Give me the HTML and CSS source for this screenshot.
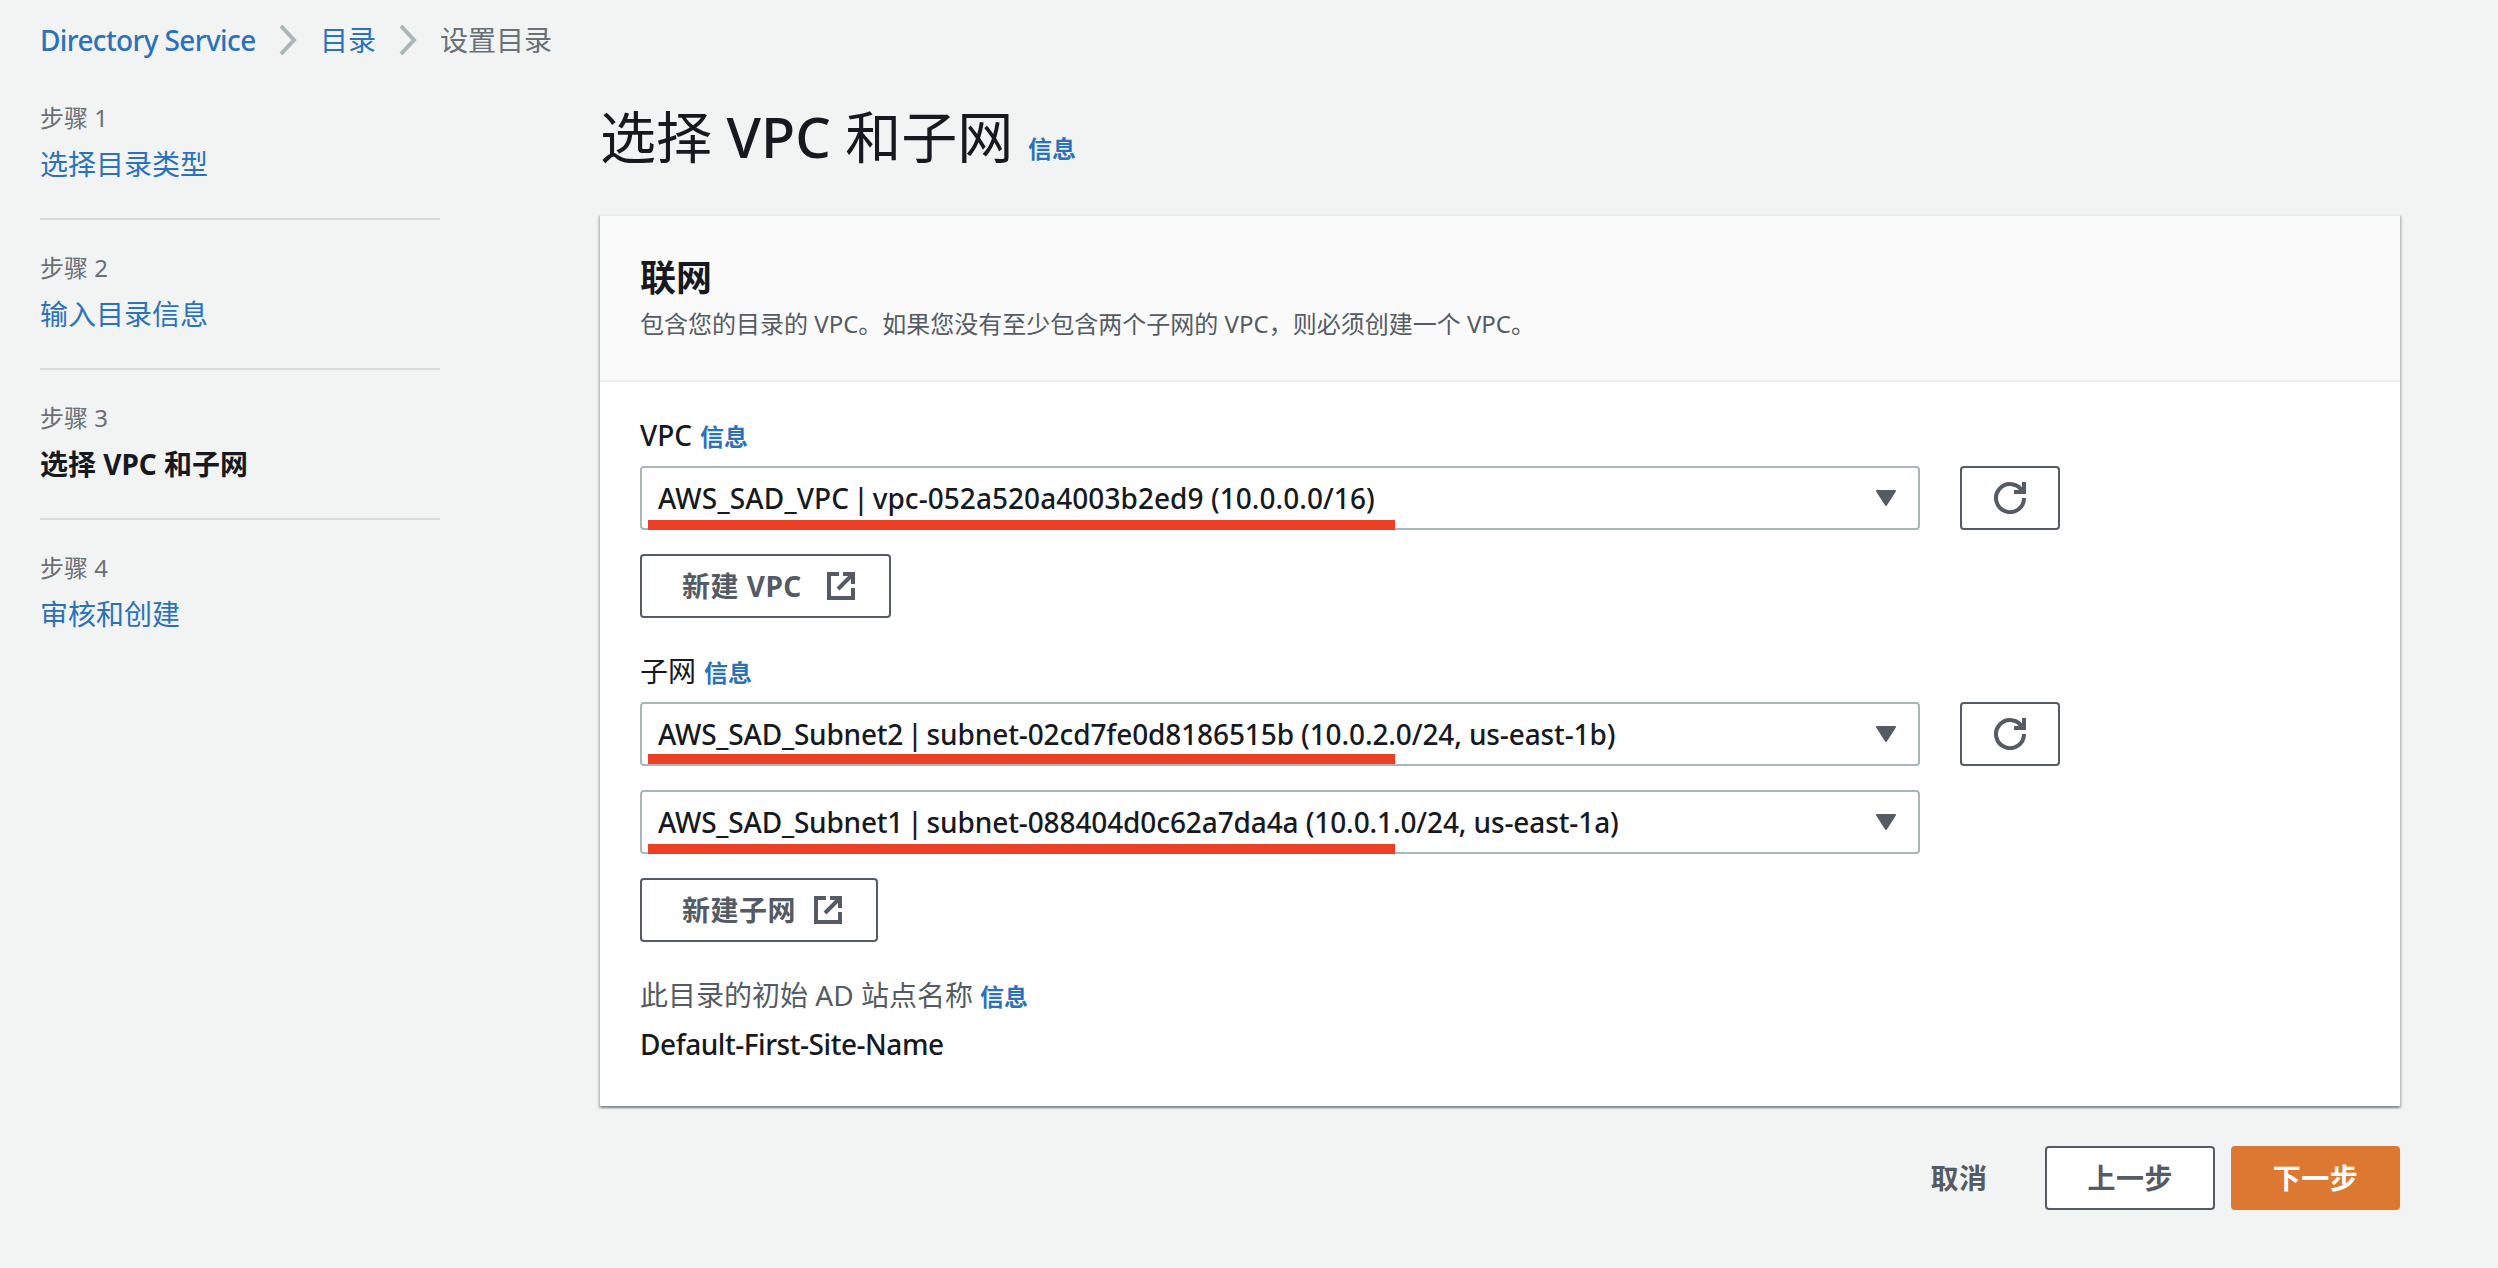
FILE: index.html
```html
<!DOCTYPE html>
<html lang="zh-CN">
<head>
<meta charset="utf-8">
<title>选择 VPC 和子网</title>
<link rel="stylesheet" href="styles.css">
</head>
<body>
<nav class="breadcrumbs">
  <a class="link service">Directory Service</a>
  <svg class="chevron" viewBox="0 0 20 32"><path d="M3 2 L16 16 L3 30"/></svg>
  <a class="link">目录</a>
  <svg class="chevron" viewBox="0 0 20 32"><path d="M3 2 L16 16 L3 30"/></svg>
  <span class="crumb-current">设置目录</span>
</nav>
<div class="layout">
  <ol class="steps">
    <li class="step"><span class="step-label">步骤 1</span><a class="step-name link">选择目录类型</a></li>
    <li class="step"><span class="step-label">步骤 2</span><a class="step-name link">输入目录信息</a></li>
    <li class="step"><span class="step-label">步骤 3</span><span class="step-name active">选择 VPC 和子网</span></li>
    <li class="step"><span class="step-label">步骤 4</span><a class="step-name link">审核和创建</a></li>
  </ol>
  <main class="content">
    <header class="page-head"><h1>选择 <span class="latin">VPC</span> 和子网</h1><a class="info">信息</a></header>
    <section class="card">
      <header class="card-head">
        <h2>联网</h2>
        <p>包含您的目录的 VPC。如果您没有至少包含两个子网的 VPC，则必须创建一个 VPC。</p>
      </header>
      <div class="card-body">
        <div class="label"><span class="latin vpc-label">VPC</span><a class="info">信息</a></div>
        <div class="row">
          <div class="select marked"><span class="option vpc"><span class="name">AWS_SAD_VPC</span> <span class="pipe">|</span> <span class="detail">vpc-052a520a4003b2ed9 (10.0.0.0/16)</span></span><svg class="caret" viewBox="0 0 20 16"><path d="M1 1h18l-9 14z"/></svg></div>
          <button class="btn refresh"><svg class="icon" viewBox="0 0 16 16"><path d="M10 5h5V0M15 8a7 7 0 1 1-.7-3"/></svg></button>
        </div>
        <button class="btn create wide"><span>新建 VPC</span><svg class="icon" viewBox="0 0 16 16"><path d="M7 2H2v12h12V9M9 2h5v5M14 2L6.500 9.500"/></svg></button>
        <div class="label second"><span>子网</span><a class="info">信息</a></div>
        <div class="row">
          <div class="select marked raised"><span class="option"><span class="name">AWS_SAD_Subnet2</span> <span class="pipe">|</span> <span class="detail">subnet-02cd7fe0d8186515b (10.0.2.0/24, us-east-1b)</span></span><svg class="caret" viewBox="0 0 20 16"><path d="M1 1h18l-9 14z"/></svg></div>
          <button class="btn refresh"><svg class="icon" viewBox="0 0 16 16"><path d="M10 5h5V0M15 8a7 7 0 1 1-.7-3"/></svg></button>
        </div>
        <div class="row next">
          <div class="select marked"><span class="option"><span class="name">AWS_SAD_Subnet1</span> <span class="pipe">|</span> <span class="detail">subnet-088404d0c62a7da4a (10.0.1.0/24, us-east-1a)</span></span><svg class="caret" viewBox="0 0 20 16"><path d="M1 1h18l-9 14z"/></svg></div>
        </div>
        <button class="btn create"><span>新建子网</span><svg class="icon" viewBox="0 0 16 16"><path d="M7 2H2v12h12V9M9 2h5v5M14 2L6.500 9.500"/></svg></button>
        <div class="label site"><span>此目录的初始 AD 站点名称</span><a class="info">信息</a></div>
        <div class="value">Default-First-Site-Name</div>
      </div>
    </section>
    <footer class="actions">
      <button class="btn plain">取消</button>
      <button class="btn">上一步</button>
      <button class="btn primary">下一步</button>
    </footer>
  </main>
</div>
</body>
</html>
```
FILE: styles.css
```css
* { box-sizing: border-box; }
body {
  margin: 0;
  min-height: 1268px;
  background: #f2f3f3;
  color: #16191f;
  font: 28px/44px "Noto Sans", "Noto Sans CJK SC", sans-serif;
}
h1, h2, p, ol { margin: 0; padding: 0; }
.link { color: #2b72bb; }
.latin, .option, .value, .service { font-weight: 500; }
.breadcrumbs {
  display: flex;
  align-items: center;
  height: 44px;
  margin: 18px 0 0 40px;
}
.service { width: 216px; white-space: nowrap; letter-spacing: -.63px; }
.chevron {
  width: 20px;
  height: 32px;
  margin: 0 22px;
  fill: none;
  stroke: #aab7b8;
  stroke-width: 4;
}
.crumb-current { color: #687078; }
.layout { display: flex; padding: 38px 98px 0 40px; }
.steps { flex: none; width: 400px; margin: -30px 160px 0 0; list-style: none; }
.step { height: 150px; padding-top: 26px; border-bottom: 2px solid #d5dbdb; }
.step:last-child { border-bottom: 0; }
.step-label { display: block; font-size: 24px; line-height: 44px; color: #687078; }
.step-name { display: block; line-height: 48px; }
.active { font-weight: 700; }
.content { flex: 1; }
.page-head { display: flex; align-items: baseline; height: 114px; }
h1 { width: 412px; font-size: 56px; font-weight: 400; line-height: 72px; white-space: nowrap; }
.info { color: #2b72bb; font-size: 24px; font-weight: 700; }
.page-head .info { margin-left: 16px; }
.card {
  height: 892px;
  background: #fff;
  border-top: 2px solid #eaeded;
  box-shadow: 0 2px 2px 0 rgba(0, 28, 36, .3), 2px 2px 2px 0 rgba(0, 28, 36, .15), -2px 2px 2px 0 rgba(0, 28, 36, .15);
}
.card-head { height: 166px; padding: 38px 40px 0; background: #fafafa; border-bottom: 2px solid #eaeded; }
h2 { font-size: 36px; line-height: 48px; }
.card-head p { font-size: 24px; line-height: 44px; color: #545b64; }
.card-body { padding: 31px 40px 0; }
.label { display: flex; align-items: baseline; gap: 8px; height: 53px; }
.vpc-label { width: 52px; }
.row { display: flex; gap: 40px; }
.select {
  position: relative;
  display: flex;
  align-items: center;
  justify-content: space-between;
  width: 1280px;
  height: 64px;
  padding: 0 22px 0 16px;
  border: 2px solid #aab7b8;
  border-radius: 4px;
  white-space: nowrap;
}
.option { padding-bottom: 1px; letter-spacing: -.2px; }
.detail { letter-spacing: -.11px; }
.vpc .name { letter-spacing: .15px; }
.vpc .detail { letter-spacing: .05px; }
.pipe { margin: 0 -3px; }
.marked::after {
  content: "";
  position: absolute;
  left: 6px;
  bottom: -2px;
  width: 747px;
  height: 10px;
  background: #eb3f26;
}
.raised::after { bottom: 0; }
.caret { width: 20px; height: 16px; fill: #545b64; stroke: #545b64; stroke-width: 2; stroke-linejoin: round; }
.btn {
  display: flex;
  align-items: center;
  justify-content: center;
  height: 64px;
  padding: 0 40px;
  border: 2px solid #545b64;
  border-radius: 4px;
  background: #fff;
  color: #545b64;
  font: inherit;
  font-weight: 700;
  letter-spacing: .5px;
  white-space: nowrap;
}
.refresh { width: 100px; padding: 0; }
.icon { width: 32px; height: 32px; fill: none; stroke: currentColor; stroke-width: 2; }
.create { margin-top: 24px; padding-right: 32px; gap: 16px; }
.wide { gap: 23px; }
.second { margin-top: 31px; }
.next { margin-top: 24px; }
.site { margin-top: 31px; color: #545b64; }
.site .info { margin-left: -1px; }
.value { margin-top: -4px; letter-spacing: -.45px; }
.actions { display: flex; justify-content: flex-end; gap: 16px; margin-top: 40px; }
.plain { background: none; border-color: transparent; }
.primary { width: 169px; padding: 0; background: #dd7832; border-color: #dd7832; color: #fff; }
```
